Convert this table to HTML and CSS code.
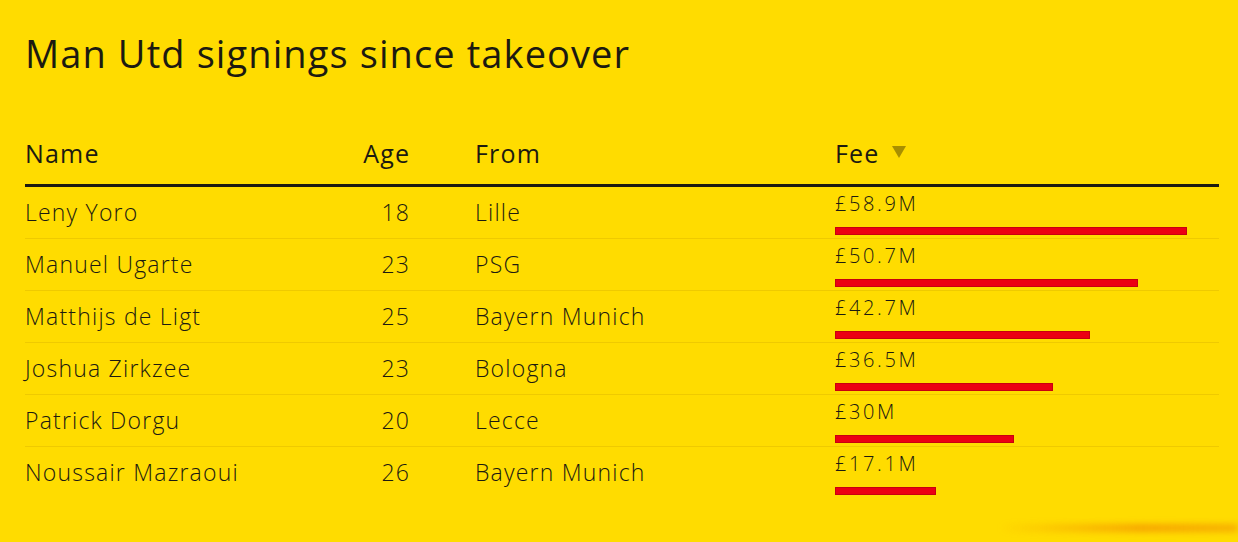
FILE: index.html
```html
<!DOCTYPE html>
<html lang="en">
<head>
<meta charset="utf-8">
<title>Man Utd signings since takeover</title>
<link rel="stylesheet" href="styles.css">
</head>
<body>
<div class="chart">
  <h1 class="title">Man Utd signings since takeover</h1>
  <div class="table">
    <div class="row head">
      <div class="cell name">Name</div>
      <div class="cell age">Age</div>
      <div class="cell from">From</div>
      <div class="cell fee-head">Fee <span class="sort"></span></div>
    </div>
    <div class="row">
      <div class="cell name">Leny Yoro</div>
      <div class="cell age">18</div>
      <div class="cell from">Lille</div>
      <div class="cell fee"><span class="fee-val">£58.9M</span><span class="bar" style="width:352px"></span></div>
    </div>
    <div class="row">
      <div class="cell name">Manuel Ugarte</div>
      <div class="cell age">23</div>
      <div class="cell from">PSG</div>
      <div class="cell fee"><span class="fee-val">£50.7M</span><span class="bar" style="width:303px"></span></div>
    </div>
    <div class="row">
      <div class="cell name">Matthijs de Ligt</div>
      <div class="cell age">25</div>
      <div class="cell from">Bayern Munich</div>
      <div class="cell fee"><span class="fee-val">£42.7M</span><span class="bar" style="width:255px"></span></div>
    </div>
    <div class="row">
      <div class="cell name">Joshua Zirkzee</div>
      <div class="cell age">23</div>
      <div class="cell from">Bologna</div>
      <div class="cell fee"><span class="fee-val">£36.5M</span><span class="bar" style="width:218px"></span></div>
    </div>
    <div class="row">
      <div class="cell name">Patrick Dorgu</div>
      <div class="cell age">20</div>
      <div class="cell from">Lecce</div>
      <div class="cell fee"><span class="fee-val">£30M</span><span class="bar" style="width:179px"></span></div>
    </div>
    <div class="row last">
      <div class="cell name">Noussair Mazraoui</div>
      <div class="cell age">26</div>
      <div class="cell from">Bayern Munich</div>
      <div class="cell fee"><span class="fee-val">£17.1M</span><span class="bar" style="width:101px"></span></div>
    </div>
  </div>
  <div class="smudge"></div>
</div>
</body>
</html>
```

FILE: styles.css
```css
html, body {
  margin: 0;
  padding: 0;
  background: #ffdc00;
}
body {
  font-family: "Open Sans", "Noto Sans", sans-serif;
  color: #1c1a10;
  width: 1238px;
  height: 542px;
  overflow: hidden;
}
.chart {
  position: relative;
  height: 542px;
  box-sizing: border-box;
  padding: 27px 19px 0 25px;
}
.title {
  margin: 0;
  font-size: 38px;
  line-height: 52px;
  font-weight: 400;
  letter-spacing: 1.1px;
}
.table {
  margin-top: 58px;
}
.row {
  display: grid;
  grid-template-columns: 300px 84px 426px 1fr;
  border-bottom: 1px solid #efca00;
}
.row.last {
  border-bottom: none;
}
.cell {
  font-size: 23px;
  font-weight: 300;
  line-height: 51px;
  letter-spacing: 1.2px;
  white-space: nowrap;
}
.age {
  text-align: right;
  margin-right: -1.2px;
}
.from {
  padding-left: 66px;
}
.row.head {
  border-bottom: 3px solid #1c1a10;
}
.row.head .cell {
  font-size: 25px;
  font-weight: 400;
  line-height: 32px;
  letter-spacing: 1.2px;
  padding-bottom: 15px;
}
.row.head .age {
  margin-right: -1.2px;
}
.fee-head {
  display: flex;
  align-items: center;
  gap: 12px;
}
.sort {
  width: 0;
  height: 0;
  border-left: 7px solid transparent;
  border-right: 7px solid transparent;
  border-top: 12px solid #a88f00;
  margin-top: -2px;
}
.fee {
  display: flex;
  flex-direction: column;
  align-items: flex-start;
  padding-top: 5px;
  line-height: normal;
}
.fee-val {
  font-size: 20px;
  line-height: 24px;
  font-weight: 300;
  letter-spacing: 2.6px;
}
.bar {
  display: block;
  height: 8px;
  margin-top: 11px;
  background: #ec0012;
  box-shadow: inset 0 0 0 1px #c8000f;
}
.smudge {
  position: absolute;
  right: 0;
  bottom: 10px;
  width: 240px;
  height: 8px;
  background: linear-gradient(90deg, rgba(240,140,0,0), rgba(240,120,0,0.55) 60%, rgba(235,110,0,0.4));
  filter: blur(3px);
}
```
